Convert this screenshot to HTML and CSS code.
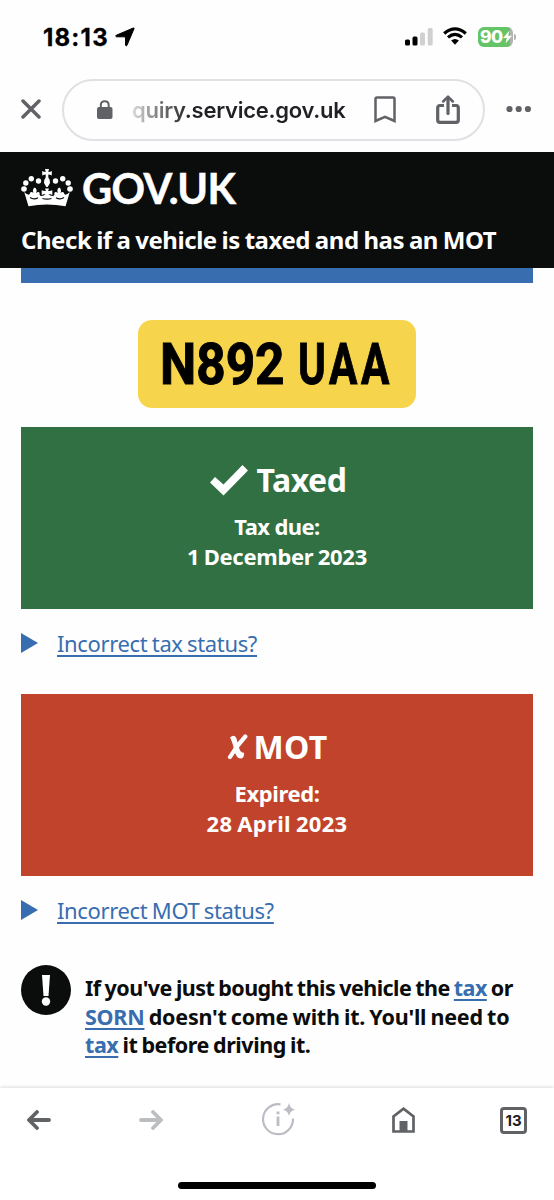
FILE: index.html
```html
<!DOCTYPE html>
<html lang="en">
<head>
<meta charset="utf-8">
<title>Check if a vehicle is taxed and has an MOT</title>
<link rel="stylesheet" href="styles.css">
</head>
<body>
<div class="phone">
  <div class="status-bar">
    <span class="clock">18:13</span>
    <svg class="location" width="20" height="20" viewBox="0 0 20 20"><path stroke="#000" stroke-linejoin="round" d="M18.300 1Q19.400.6 19 1.700L12 18.300Q11.200 19.500 10.500 18.200V11Q10.400 9.800 9.200 9.800H1.500Q-.2 9.100 1.400 8.200Z"/></svg>
    <svg class="signal" width="28" height="18" viewBox="0 0 28 18"><rect y="11.500" width="5" height="6" rx="1.500"/><rect x="7.500" y="8.500" width="5" height="9" rx="1.500"/><g fill="#d0d0d0"><rect x="15" y="4.500" width="5" height="13" rx="1.500"/><rect x="22.700" y="0" width="5" height="17.500" rx="1.500"/></g></svg>
    <svg class="wifi" width="24" height="18" viewBox="0 0 24 18"><g fill="none" stroke="#000" stroke-width="3.200"><path d="M1.200 6.500Q12-2.700 22.800 6.500"/><path d="M5 10.400Q12 4.400 19 10.400"/></g><path d="M8.100 13.600Q12 10.400 15.900 13.600L12 17.700Z"/></svg>
    <div class="battery"><span>90</span><svg width="9" height="14" viewBox="0 0 9 13"><path d="M6.500 0 0 7.500H3.800L2.500 13 9 5.300H5.100Z" fill="#fff"/></svg></div>
    <i class="battery-tip"></i>
  </div>

  <div class="toolbar">
    <svg class="close" width="20" height="20" viewBox="0 0 20 20"><path d="M2 2 18 18M18 2 2 18" fill="none" stroke="#606266" stroke-width="3.500" stroke-linecap="round"/></svg>
    <div class="address">
      <svg class="lock" width="16" height="20" viewBox="0 0 16 20"><rect y="7" width="15.500" height="12" rx="2" fill="#606266"/><path d="M3.800 8V5Q3.800 1.200 7.750 1.200T11.700 5V8" fill="none" stroke="#606266" stroke-width="2"/></svg>
      <span class="url">quiry.service.gov.uk</span>
      <svg class="bookmark" width="22" height="28" viewBox="0 0 22 28"><path d="M1.500 25V3Q1.500 1.500 3 1.500H19Q20.500 1.500 20.500 3V25L11 20.800Z" fill="none" stroke="#606266" stroke-width="2.500"/></svg>
      <svg class="share" width="24" height="30" viewBox="0 0 24 30"><g fill="none" stroke="#606266" stroke-width="3.200"><path d="M8 10.500H4Q1.700 10.500 1.700 12.800V25Q1.700 27.300 4 27.300H20Q22.300 27.300 22.300 25V12.800Q22.300 10.500 20 10.500H16"/><path d="M12 18.500V3" stroke-linecap="round"/><path d="M7.200 6.500 12 1.700 16.800 6.500" stroke-width="2.500" stroke-linecap="round" stroke-linejoin="round"/></g></svg>
    </div>
    <svg class="more" width="26" height="8" viewBox="0 0 26 8"><g fill="#606266"><circle cx="3.500" cy="4" r="3.100"/><circle cx="12.700" cy="4" r="3.100"/><circle cx="21.900" cy="4" r="3.100"/></g></svg>
  </div>

  <header class="gov-header">
    <div class="brand">
      <svg class="crown" width="52" height="38" viewBox="0 0 52 38">
        <g fill="#fff">
          <circle cx="3" cy="20" r="2.800"/><circle cx="4.800" cy="14" r="2.700"/><circle cx="10.300" cy="9.700" r="2.700"/><circle cx="17.500" cy="12" r="2.700"/><circle cx="34.500" cy="12" r="2.700"/><circle cx="41.700" cy="9.700" r="2.700"/><circle cx="47.200" cy="14" r="2.700"/><circle cx="49" cy="20" r="2.800"/>
          <path d="M24 0H28L27.300 3Q29 3 30.800 2V6.500Q29 5.500 27.300 5.500V8.500Q29.500 11 29 14L26.700 18H25.300L23 14Q22.500 11 24.700 8.500V5.500Q23 5.500 21.200 6.500V2Q23 3 24.700 3Z"/>
          <path d="M3.200 23Q5 25 7.500 25.800Q9.300 25.400 9 23.800Q10.600 22.200 12.500 24Q10.800 20.500 13.800 18.500Q16.800 20.500 15 24Q17.500 22.200 18.700 24Q18 26.700 20.400 27Q23 26.800 24.500 25Q22.300 25 20.700 26V21.200Q22.600 22.200 24.900 22L24 19.500H28L27.100 22Q29.400 22.200 31.300 21.200V26Q29.700 25 27.500 25Q29 26.800 31.600 27Q34 26.700 33.300 24Q34.500 22.200 37 24Q35.200 20.500 38.200 18.500Q41.200 20.500 39.500 24Q41.400 22.200 43 23.800Q42.700 25.400 44.500 25.800Q47 25 48.800 23L44.500 37.200Q26 34 7.500 37.200Z"/>
        </g>
        <g fill="none" stroke="#0b0c0c" stroke-width="1.200"><path d="M9 28.500Q13 31 17 28.700M35 28.700Q39 31 43 28.500M21.500 29.500Q26 30.700 30.500 29.500"/></g>
      </svg>
      <span class="brand-name">GOV.UK</span>
    </div>
    <div class="service"><span>Check if a vehicle is taxed and has an MOT</span></div>
  </header>

  <main class="content">
    <div class="blue-strip"></div>
    <div class="plate"><span class="plate-start">N892</span> <span class="plate-end">UAA</span></div>

    <section class="panel taxed">
      <h2><svg width="38" height="31" viewBox="0 0 38 31"><path d="M0 17.500 5 12 13.500 19.500 32.500 0 38 5.500 13.500 30.500Z" fill="#fff"/></svg><span>Taxed</span></h2>
      <p><span class="due">Tax due:</span><br><span class="due-date">1 December 2023</span></p>
    </section>
    <div class="details"><i class="triangle"></i><a class="tax-status">Incorrect tax status?</a></div>

    <section class="panel expired">
      <h2><svg width="21" height="26" viewBox="0 0 21 26"><path d="M3 3.500Q7 0 9.300 4Q10.500 8 12 13.500Q13.500 19.500 17 18.500Q17.500 24.500 13.500 24.500Q9.500 24.500 7.500 17Q5.500 8 3 3.500Z" fill="#fff"/><path d="M18.300 2.500Q9.500 12 3 23" fill="none" stroke="#fff" stroke-width="4.200" stroke-linecap="round"/></svg><span>MOT</span></h2>
      <p><span class="exp">Expired:</span><br><span class="exp-date">28 April 2023</span></p>
    </section>
    <div class="details"><i class="triangle"></i><a class="mot-status">Incorrect MOT status?</a></div>

    <div class="warning">
      <svg width="50" height="50" viewBox="0 0 50 50"><circle cx="25" cy="25" r="25" fill="#0b0c0c"/><path d="M21 10H29L27.500 31H22.500Z" fill="#fff"/><circle cx="25" cy="36.500" r="4.200" fill="#fff"/></svg>
      <p><span class="w1">If you've just bought this vehicle the <a>tax</a> or</span><br><span class="w2"><a>SORN</a> doesn't come with it. You'll need to</span><br><span class="w3"><a>tax</a> it before driving it.</span></p>
    </div>
  </main>

  <nav class="bottom-bar">
    <div class="tabs">
      <svg class="back" width="24" height="20" viewBox="0 0 24 20"><path d="M22 10H2.500M10 2 2 10 10 18" fill="none" stroke="#606266" stroke-width="3.800" stroke-linecap="round" stroke-linejoin="round"/></svg>
      <svg class="forward" width="24" height="20" viewBox="0 0 24 20"><path d="M2 10H21.500M14 2 22 10 14 18" fill="none" stroke="#bcbdc0" stroke-width="3.800" stroke-linecap="round" stroke-linejoin="round"/></svg>
      <svg class="info" width="34" height="33" viewBox="0 0 34 33"><path d="M18.500 1.400A15 15 0 1 0 31 15.500" fill="none" stroke="#bcbdc4" stroke-width="2.200"/><path d="M14.600 13.500H17.400V23H14.600ZM14.600 8.500H17.400V11.200H14.600ZM27 0Q28 5.500 33 6.700Q28 7.800 27 13Q26 7.800 21 6.700Q26 5.500 27 0Z" fill="#bcbdc4"/></svg>
      <svg class="home" width="23" height="26" viewBox="0 0 23 26"><path d="M1.500 24.500V9.500L11.500 1.800 21.500 9.500V24.500Z" fill="none" stroke="#606266" stroke-width="2.700"/><path d="M7.500 14H15.500V25H7.500Z" fill="#606266"/></svg>
      <div class="tab-count">13</div>
    </div>
    <div class="home-indicator"></div>
  </nav>
</div>
</body>
</html>
```
FILE: styles.css
```css
* { box-sizing: border-box; margin: 0; padding: 0; }
body { background: #fff; }
svg { display: block; flex: none; }
span { white-space: nowrap; }
.phone { width: 554px; height: 1200px; display: flex; flex-direction: column; overflow: hidden; background: #fefefe; font-family: "Noto Sans", sans-serif; color: #0b0c0c; }

.status-bar { height: 79px; padding: 27px 37px 0 43px; display: flex; align-items: flex-start; }
.clock { font: 700 24px/21px Inter, sans-serif; letter-spacing: 1.200px; -webkit-text-stroke: .3px #000; color: #000; width: 72px; }
.signal { margin: 1px 10px 0 270px; }
.wifi { margin-right: 11px; }
.battery { width: 35px; height: 20px; border-radius: 6px; background: linear-gradient(90deg, #65c466 32px, #b2b2b2 32px); display: flex; align-items: center; padding-left: 2px; color: #fff; font: 800 17.500px/20px Inter, sans-serif; letter-spacing: -.6px; }
.battery-tip { width: 2px; height: 6px; margin: 7px 0 0 1px; border-radius: 0 2px 2px 0; background: #b2b2b2; }

.toolbar { height: 73px; display: flex; padding-left: 21px; }
.close { margin: 20px 21px 0 0; }
.address { width: 423px; height: 62px; border: 2px solid #e0e0e5; border-radius: 31px; display: flex; align-items: center; padding-left: 33px; }
.url { width: 216px; margin-left: 19px; font: 600 22px/30px Inter, sans-serif; letter-spacing: -.25px; color: transparent; background: linear-gradient(90deg, #ddd 0, #777 28px, #202124 58px); background-clip: text; -webkit-background-clip: text; }
.bookmark { margin: 0 0 0 26px; }
.share { margin-left: 40px; }
.more { margin: 26px 0 0 21px; }

.gov-header { height: 116px; background: #0b0c0c; color: #fff; padding: 17px 21px 0; }
.brand { display: flex; height: 38px; }
.brand-name { margin-left: 9px; font: 700 41.500px/38px Lato, sans-serif; letter-spacing: -.6px; -webkit-text-stroke: .5px #fff; }
.service { margin-top: 17px; font-size: 24px; line-height: 32px; font-weight: 700; letter-spacing: -.45px; word-spacing: -1px; }

.content { padding: 0 21px; height: 820px; }
.blue-strip { height: 15px; background: #386eb0; }
.plate { width: 278px; height: 88px; margin: 37px auto 19px; padding-left: 22px; border-radius: 14px; background: #f6d44b; display: flex; align-items: center; color: #000; font: 700 57px/90px Roboto, sans-serif; -webkit-text-stroke: 1px #000; }
.plate span { position: relative; top: 1px; transform-origin: left center; }
.plate-start { width: 140px; transform: scaleX(.9); }
.plate-end { letter-spacing: 5px; transform: scaleX(.74); }
.panel { height: 182px; color: #fff; text-align: center; font-weight: 700; padding-top: 32px; }
.taxed { background: #307042; }
.expired { background: #c2432b; }
.panel h2 { height: 42px; display: flex; justify-content: center; align-items: center; font-size: 32px; line-height: 42px; }
.taxed h2 { padding-left: 2px; }
.taxed h2 span { margin-left: 9px; letter-spacing: -.5px; }
.expired h2 span { margin-left: 6px; letter-spacing: .3px; }
.panel p { margin-top: 10px; font-size: 22px; line-height: 30px; }
.due { letter-spacing: -.6px; }
.due-date { letter-spacing: -.3px; word-spacing: -1px; }
.exp { letter-spacing: -.4px; }
.exp-date { letter-spacing: .3px; word-spacing: -1px; }
.details { height: 85px; display: flex; color: #386eb0; padding-top: 19px; letter-spacing: -.35px; word-spacing: -1px; }
.triangle { width: 17px; height: 20px; margin: 5px 19px 0 0; background: #386eb0; clip-path: polygon(0 0, 100% 50%, 0 100%); }
.details a { font-size: 22px; line-height: 30px; text-decoration: underline; text-decoration-thickness: 1.500px; text-underline-offset: 3px; }
.warning { display: flex; margin-top: 4px; }
.warning p { margin: 9px 0 0 14px; font-size: 21.500px; line-height: 28.500px; font-weight: 700; word-spacing: -1px; }
.w1 { letter-spacing: -.55px; }
.w2 { letter-spacing: -.25px; }
.w3 { letter-spacing: -.45px; }
.warning a { color: #386eb0; text-decoration: underline; text-decoration-thickness: 2px; text-underline-offset: 3px; }

.bottom-bar { height: 112px; background: #fff; box-shadow: 0 -1px 3px #ddd; }
.tabs { display: flex; height: 93px; padding-left: 27px; }
.back { margin-top: 22px; }
.forward { margin: 22px 0 0 88px; }
.info { margin: 15px 0 0 99px; }
.home { margin: 19px 0 0 96px; }
.tab-count { width: 27px; height: 27px; margin: 19px 0 0 85px; border: 3px solid #606266; border-radius: 4px; text-align: center; font: 700 15px/21px Inter, sans-serif; color: #202124; }
.home-indicator { width: 198px; height: 7px; margin-left: 178px; border-radius: 4px; background: #000; margin-top: 1px; }
```
